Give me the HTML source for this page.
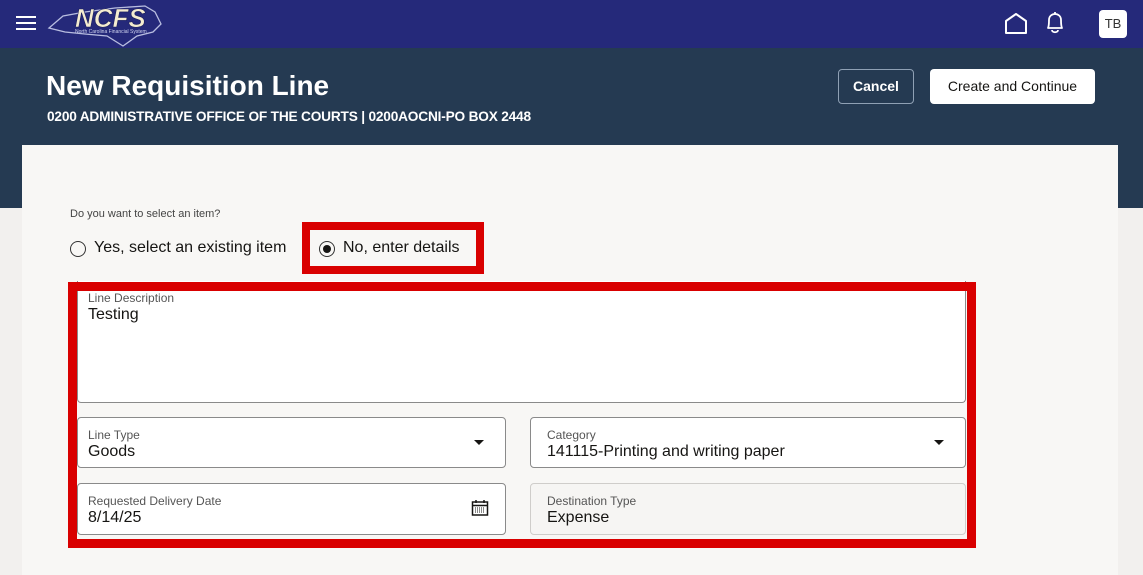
<!DOCTYPE html>
<html><head><meta charset="utf-8"><style>
*{box-sizing:border-box;margin:0;padding:0}
body{width:1143px;height:565px;overflow:hidden;background:#f2f0ee;font-family:"Liberation Sans",sans-serif;position:relative}
.abs{position:absolute}
.top{left:0;top:0;width:1143px;height:48px;background:#25297a}
.hdr{left:0;top:48px;width:1143px;height:160px;background:#253a52}
.card{left:22px;top:145px;width:1096px;height:430px;background:#f8f7f5}
.fld{position:absolute;background:#fff;border:1px solid #8a8a8a;border-radius:4px}
.lbl{position:absolute;left:10px;top:10px;font-size:12px;color:#555}
.val{position:absolute;left:10px;top:25px;font-size:16px;color:#161513}
.caret{position:absolute;right:21px;top:22px;width:0;height:0;border-left:5px solid transparent;border-right:5px solid transparent;border-top:5px solid #161513}
.red{position:absolute;border:9px solid #d90000}
</style></head><body>
<div class="abs top"></div>
<div class="abs" style="left:16px;top:16px;width:20px;height:2px;background:#fff"></div>
<div class="abs" style="left:16px;top:22px;width:20px;height:2px;background:#fff"></div>
<div class="abs" style="left:16px;top:28px;width:20px;height:2px;background:#fff"></div>
<svg class="abs" style="left:45px;top:2px" width="122" height="46" viewBox="0 0 122 46"><path d="M4 26 L18 14 L40 10 L70 6 L100 4 L110 10 L116 22 L108 30 L92 34 L78 44 L62 34 L40 32 L20 30 Z" fill="none" stroke="#b8bde0" stroke-width="1.3"/><text x="30" y="25" font-family="Liberation Sans" font-weight="bold" font-style="italic" font-size="26" fill="#f4ecd0" stroke="#1a1d5a" stroke-width="0.6">NCFS</text><text x="30" y="31" font-size="5" fill="#d0d4f0" font-family="Liberation Sans">North Carolina Financial System</text></svg>
<svg class="abs" style="left:1004px;top:12px" width="24" height="22" viewBox="0 0 24 22"><path d="M2 21 V9 L12 2 L22 9 V21 Z" fill="none" stroke="#fff" stroke-width="2" stroke-linejoin="round"/></svg>
<svg class="abs" style="left:1045px;top:11px" width="20" height="24" viewBox="0 0 20 24"><path d="M3 17 C4 15 4 12 4 9 C4 5 7 3 10 3 C13 3 16 5 16 9 C16 12 16 15 17 17 Z M7 19 C7 22 13 22 13 19" fill="none" stroke="#fff" stroke-width="1.8" stroke-linejoin="round"/><path d="M10 1 V3" stroke="#fff" stroke-width="1.8"/></svg>
<div class="abs" style="left:1099px;top:10px;width:28px;height:28px;background:#fff;border-radius:4px;font-size:13px;color:#333;text-align:center;line-height:28px">TB</div>
<div class="abs hdr"></div>
<div class="abs" style="left:46px;top:70px;font-size:28px;font-weight:bold;color:#fff">New Requisition Line</div>
<div class="abs" style="left:47px;top:109px;font-size:13.7px;font-weight:bold;color:#fff;letter-spacing:-0.2px">0200 ADMINISTRATIVE OFFICE OF THE COURTS | 0200AOCNI-PO BOX 2448</div>
<div class="abs" style="left:838px;top:69px;width:76px;height:35px;border:1px solid #8fa0b4;border-radius:4px;color:#fff;font-weight:bold;font-size:14px;text-align:center;line-height:33px">Cancel</div>
<div class="abs" style="left:930px;top:69px;width:165px;height:35px;background:#fff;border-radius:4px;color:#161513;font-size:14px;text-align:center;line-height:35px">Create and Continue</div>
<div class="abs card"></div>
<div class="abs" style="left:70px;top:208px;font-size:11px;color:#444">Do you want to select an item?</div>
<div class="abs" style="left:70px;top:241px;width:16px;height:16px;border:1.5px solid #333;border-radius:50%"></div>
<div class="abs" style="left:94px;top:239px;font-size:16px;color:#161513">Yes, select an existing item</div>
<div class="red" style="left:302px;top:222px;width:182px;height:52px;border-width:8px"></div>
<div class="abs" style="left:319px;top:241px;width:16px;height:16px;border:1.5px solid #333;border-radius:50%"></div>
<div class="abs" style="left:323px;top:245px;width:8px;height:8px;background:#161513;border-radius:50%"></div>
<div class="abs" style="left:343px;top:239px;font-size:16px;color:#161513">No, enter details</div>
<div class="fld" style="left:77px;top:281px;width:889px;height:122px;border-top:none;border-radius:0 0 4px 4px"><div class="lbl" style="top:10px">Line Description</div><div class="val" style="top:25px">Testing</div></div>
<div class="fld" style="left:77px;top:417px;width:429px;height:51px"><div class="lbl">Line Type</div><div class="val">Goods</div><div class="caret"></div></div>
<div class="fld" style="left:530px;top:417px;width:436px;height:51px"><div class="lbl" style="left:16px">Category</div><div class="val" style="left:16px">141115-Printing and writing paper</div><div class="caret"></div></div>
<div class="fld" style="left:77px;top:483px;width:429px;height:52px"><div class="lbl">Requested Delivery Date</div><div class="val">8/14/25</div>
<svg style="position:absolute;right:16px;top:15px" width="18" height="18" viewBox="0 0 18 18"><rect x="1.5" y="3" width="15" height="13" fill="none" stroke="#161513" stroke-width="1.5"/><path d="M5 1V4M13 1V4M1.5 6.5H16.5" stroke="#161513" stroke-width="1.5"/><path d="M4 9H14M4 11H14M4 13H14" stroke="#161513" stroke-width="1" stroke-dasharray="1 1"/></svg></div>
<div class="fld" style="left:530px;top:483px;width:436px;height:52px;background:#f6f5f3;border-color:#cfcdca"><div class="lbl" style="left:16px">Destination Type</div><div class="val" style="left:16px">Expense</div></div>
<div class="red" style="left:68px;top:282px;width:908px;height:266px"></div>
</body></html>
